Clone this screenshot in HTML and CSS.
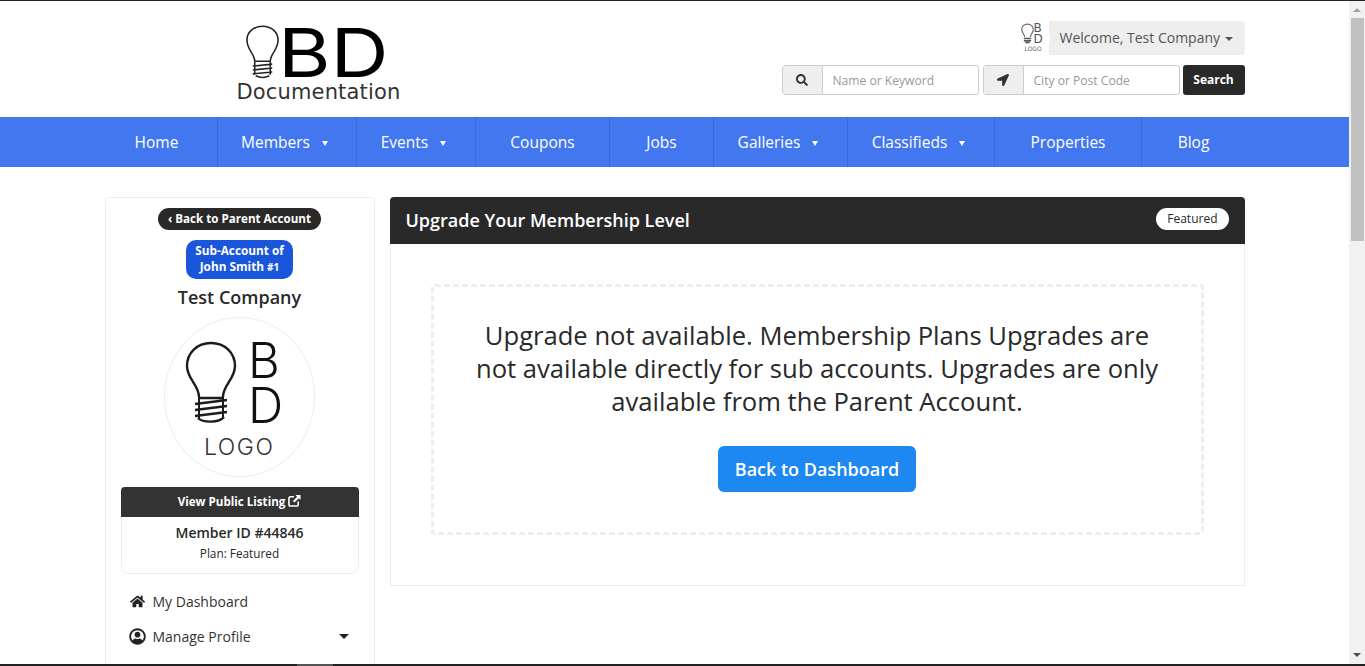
FILE: index.html
```html
<!DOCTYPE html>
<html lang="en">
<head>
    <meta charset="UTF-8">
    <meta name="viewport" content="width=device-width, initial-scale=1.0">
    <title>Upgrade Your Membership Level</title>
    <link rel="stylesheet" href="styles.css">
</head>
<body>

<div class="window">
    <div class="page">

        <header class="site-header">
            <div class="container header-row">
                <div class="site-logo">
                    <svg class="site-bulb" viewBox="0 0 36 56" aria-hidden="true">
                        <path d="M10 38 C10 30 2 27 2 16 C2 8 9 2 18 2 C27 2 34 8 34 16 C34 27 26 30 26 38" fill="none" stroke="#222" stroke-width="1.6"/>
                        <path d="M10 38 H26 M8 43 L28 41 M8 47 L28 45 M8 51 L28 49 M10 38 V52 M26 38 V52 M11 53 C15 55 21 55 25 53" fill="none" stroke="#222" stroke-width="1.6"/>
                    </svg>
                    <span class="logo-bd">BD</span>
                    <span class="logo-doc">Documentation</span>
                </div>
                <div class="header-tools">
                    <div class="welcome">
                        <div class="welcome-avatar">
                            <svg class="mini-bulb" viewBox="0 0 36 56" aria-hidden="true">
                                <path d="M10 38 C10 30 2 27 2 16 C2 8 9 2 18 2 C27 2 34 8 34 16 C34 27 26 30 26 38" fill="none" stroke="#666" stroke-width="3"/>
                                <path d="M8 42 H28 M8 48 H28 M12 53 H24" fill="none" stroke="#555" stroke-width="4"/>
                            </svg>
                            <span class="mini-bd">B<br>D</span>
                            <span class="mini-logo">LOGO</span>
                        </div>
                        <div class="welcome-pill">Welcome, Test Company <i class="caret"></i></div>
                    </div>
                    <form class="search-row">
                        <div class="search-group">
                            <span class="search-addon">
                                <svg viewBox="0 0 512 512" aria-hidden="true"><path d="M505 442.7L405.3 343c-4.500-4.500-10.600-7-17-7H372c27.600-35.300 44-79.700 44-128C416 93.100 322.900 0 208 0S0 93.100 0 208s93.100 208 208 208c48.300 0 92.700-16.400 128-44v16.300c0 6.400 2.500 12.500 7 17l99.700 99.700c9.400 9.400 24.600 9.400 33.900 0l28.300-28.300c9.400-9.400 9.400-24.600.1-34zM208 336c-70.700 0-128-57.200-128-128 0-70.700 57.200-128 128-128 70.700 0 128 57.200 128 128 0 70.700-57.200 128-128 128z"/></svg>
                            </span>
                            <span class="search-input">Name or Keyword</span>
                        </div>
                        <div class="search-group">
                            <span class="search-addon">
                                <svg viewBox="0 0 512 512" aria-hidden="true"><path d="M444.500 3.500L28.700 195.400c-48 22.400-32 92.800 16 92.800h175.900v175.900c0 48 70.400 64 92.800 16L505.300 64.300c16-38.400-24.500-76.800-60.800-60.800z"/></svg>
                            </span>
                            <span class="search-input">City or Post Code</span>
                        </div>
                        <button type="button" class="search-btn">Search</button>
                    </form>
                </div>
            </div>
        </header>

        <nav class="main-nav">
            <a class="nav-home">Home</a>
            <a class="nav-members has-sub">Members <i class="nav-arrow"></i></a>
            <a class="nav-events has-sub">Events <i class="nav-arrow"></i></a>
            <a class="nav-coupons">Coupons</a>
            <a class="nav-jobs">Jobs</a>
            <a class="nav-galleries has-sub">Galleries <i class="nav-arrow"></i></a>
            <a class="nav-classifieds has-sub">Classifieds <i class="nav-arrow"></i></a>
            <a class="nav-properties">Properties</a>
            <a class="nav-blog">Blog</a>
        </nav>

        <div class="container content">
            <aside class="sidebar">
                <a class="back-pill">&lsaquo; Back to Parent Account</a>
                <div class="sub-badge">Sub-Account of<br>John Smith <small>#1</small></div>
                <div class="company">Test Company</div>
                <div class="profile-logo">
                    <svg class="profile-bulb" viewBox="0 0 52 84" aria-hidden="true">
                        <path d="M14 56 C14 44 2 38 2 25 C2 12 12 2 26 2 C40 2 50 12 50 25 C50 38 38 44 38 56" fill="none" stroke="#1c1c1c" stroke-width="2.4"/>
                        <path d="M13 57 H39 M10 63 L42 59 M10 69 L42 65 M10 75 L42 71 M13 77 C18 82 34 82 39 76" fill="none" stroke="#1c1c1c" stroke-width="2.4"/>
                        <path d="M14 56 V78 M38 56 V76" fill="none" stroke="#1c1c1c" stroke-width="2"/>
                    </svg>
                    <span class="profile-bd">B<br>D</span>
                    <span class="profile-word">LOGO</span>
                </div>
                <div class="listing-card">
                    <a class="listing-link">View Public Listing
                        <svg viewBox="0 0 14 14" aria-hidden="true"><path d="M11 8 V11.5 C11 12.3 10.3 13 9.5 13 H2.5 C1.7 13 1 12.3 1 11.5 V4.500 C1 3.700 1.700 3 2.500 3 H6.500" fill="none" stroke="#fff" stroke-width="1.7"/><path d="M8 1 H13.5 V6.5 L11.6 4.7 L7 9.2 L5.3 7.5 L9.8 2.9 Z" fill="#fff"/></svg>
                    </a>
                    <div class="member-id">Member ID #44846</div>
                    <div class="member-plan">Plan: Featured</div>
                </div>
                <ul class="side-menu">
                    <li>
                        <svg viewBox="0 0 576 512" aria-hidden="true"><path d="M280.400 148.300L96 300.100V464a16 16 0 0 0 16 16l112.100-.3a16 16 0 0 0 15.900-16V368a16 16 0 0 1 16-16h64a16 16 0 0 1 16 16v95.600a16 16 0 0 0 16 16.100L464 480a16 16 0 0 0 16-16V300L295.700 148.300a12.200 12.200 0 0 0-15.300 0zM571.600 251.500L488 182.600V44.100a12 12 0 0 0-12-12h-56a12 12 0 0 0-12 12v72.600L318.500 43a48 48 0 0 0-61 0L4.300 251.500a12 12 0 0 0-1.600 16.900l25.500 31A12 12 0 0 0 45.200 301l235.200-193.700a12.200 12.200 0 0 1 15.300 0L530.900 301a12 12 0 0 0 16.900-1.600l25.500-31a12 12 0 0 0-1.700-16.900z"/></svg>
                        <span>My Dashboard</span>
                    </li>
                    <li>
                        <svg viewBox="0 0 512 512" aria-hidden="true"><path fill-rule="evenodd" d="M256 8C119 8 8 119 8 256s111 248 248 248 248-111 248-248S393 8 256 8zm0 56c106 0 192 86 192 192 0 45-15 86-42 118-30-40-70-60-90-60-18 12-38 18-60 18s-42-6-60-18c-20 0-60 20-90 60-27-32-42-73-42-118C64 150 150 64 256 64zm0 48c-48 0-88 40-88 88s40 88 88 88 88-40 88-88-40-88-88-88z"/></svg>
                        <span>Manage Profile</span>
                        <i class="menu-caret"></i>
                    </li>
                </ul>
            </aside>

            <main class="upgrade">
                <div class="upgrade-head">
                    <h1>Upgrade Your Membership Level</h1>
                    <span class="plan-pill">Featured</span>
                </div>
                <div class="upgrade-body">
                    <div class="notice">
                        <p>Upgrade not available. Membership Plans Upgrades are not available directly for sub accounts. Upgrades are only available from the Parent Account.</p>
                        <a class="dash-btn">Back to Dashboard</a>
                    </div>
                </div>
            </main>
        </div>

    </div>
    <div class="scrollbar">
        <i class="scroll-up"></i>
        <div class="scroll-thumb"></div>
        <i class="scroll-down"></i>
    </div>
</div>

<div class="taskbar"><div class="taskbar-mark"></div></div>

</body>
</html>
```

FILE: styles.css
```css
html, body {
    height: 100%;
}

body {
    margin: 0;
    font-family: "Open Sans", Arial, sans-serif;
    color: #292929;
    background-color: #fff;
    border-top: 1px solid #222;
    box-sizing: border-box;
    display: flex;
    flex-direction: column;
    overflow: hidden;
}

.window {
    flex: 1;
    min-height: 0;
    display: flex;
}

.page {
    flex: 1;
    min-width: 0;
    overflow: hidden;
}

.container {
    width: 1140px;
    margin: 0 auto;
}

/* scrollbar + bottom edge of the capture */
.scrollbar {
    width: 16px;
    background-color: #f1f1f1;
    display: flex;
    flex-direction: column;
    align-items: center;
    position: relative;
}

.scroll-up {
    margin-top: 7px;
    border-bottom: 4px solid #a3a3a3;
    border-left: 4px solid transparent;
    border-right: 4px solid transparent;
}

.scroll-thumb {
    width: 13px;
    height: 223px;
    margin: 6px 0 0 1px;
    background-color: #c1c1c1;
}

.scroll-down {
    margin-top: auto;
    margin-bottom: 7px;
    border-top: 4px solid #505050;
    border-left: 4px solid transparent;
    border-right: 4px solid transparent;
}

.taskbar {
    height: 2px;
    background-color: #222;
    position: relative;
}

.taskbar-mark {
    position: absolute;
    left: 297px;
    top: 0;
    width: 36px;
    height: 2px;
    background-color: #555;
}

/* header */
.site-header {
    height: 116px;
}

.header-row {
    display: flex;
    justify-content: space-between;
}

.site-logo {
    position: relative;
    margin-left: 131px;
    width: 170px;
    height: 116px;
}

.site-bulb {
    position: absolute;
    left: 9px;
    top: 23px;
    width: 35px;
    height: 55px;
}

.logo-bd {
    position: absolute;
    left: 42px;
    top: 27px;
    font-family: "Inter", sans-serif;
    font-size: 67px;
    font-weight: 400;
    line-height: 50px;
    color: #000;
    transform: scaleX(1.2);
    transform-origin: left top;
}

.logo-doc {
    position: absolute;
    left: 1px;
    top: 79px;
    font-family: "DejaVu Sans", sans-serif;
    font-size: 21px;
    letter-spacing: 0.15px;
    line-height: 24px;
    color: #333;
    white-space: nowrap;
}

.header-tools {
    padding-top: 20px;
    display: flex;
    flex-direction: column;
    align-items: flex-end;
}

.welcome {
    display: flex;
    height: 34px;
}

.welcome-avatar {
    position: relative;
    width: 32px;
    height: 34px;
    background-color: #fff;
    border-radius: 50%;
    margin-right: -1px;
    z-index: 1;
}

.mini-bulb {
    position: absolute;
    left: 3px;
    top: 2px;
    width: 13px;
    height: 21px;
}

.mini-bd {
    position: absolute;
    left: 16px;
    top: 2px;
    font-family: "DejaVu Sans", sans-serif;
    font-size: 12px;
    line-height: 11px;
    color: #555;
}

.mini-logo {
    position: absolute;
    left: 7px;
    top: 25px;
    font-family: "DejaVu Sans", sans-serif;
    font-size: 6px;
    line-height: 6px;
    color: #666;
}

.welcome-pill {
    width: 196px;
    box-sizing: border-box;
    padding-left: 11px;
    background-color: #eee;
    border-radius: 0 4px 4px 0;
    font-size: 14px;
    line-height: 34px;
    color: #555;
}

.caret {
    display: inline-block;
    margin-left: 1px;
    vertical-align: middle;
    border-top: 4px solid #555;
    border-left: 4px solid transparent;
    border-right: 4px solid transparent;
}

.search-row {
    display: flex;
    margin: 10px 0 0;
}

.search-group {
    display: flex;
    width: 197px;
    height: 30px;
    box-sizing: border-box;
    margin-right: 4px;
    border: 1px solid #ccc;
    border-radius: 3px;
    font-size: 12.1px;
    line-height: 30px;
    color: #999;
}

.search-group + .search-group {
    margin-right: 3px;
}

.search-addon {
    width: 39px;
    background-color: #eee;
    border-right: 1px solid #ccc;
    display: flex;
    align-items: center;
    justify-content: center;
}

.search-addon svg {
    width: 12px;
    height: 12px;
    fill: #333;
}

.search-input {
    padding-left: 10px;
}

.search-btn {
    width: 62px;
    height: 30px;
    border: none;
    border-radius: 3px;
    padding: 0 0 2px;
    background-color: #292929;
    color: #fff;
    font-family: inherit;
    font-size: 12px;
    font-weight: 700;
}

/* main nav */
.main-nav {
    height: 50px;
    display: flex;
    padding-left: 100px;
    background-color: #4277ef;
    font-size: 15.5px;
    font-weight: 500;
    line-height: 50px;
    color: #fff;
}

.main-nav a {
    box-sizing: border-box;
    border-right: 1px solid #3a69d6;
    text-align: center;
    white-space: nowrap;
}

.main-nav a.has-sub {
    padding-right: 5px;
}

.nav-home { width: 118px; padding-right: 4px; }
.nav-members { width: 139px; }
.nav-events { width: 119px; }
.nav-coupons { width: 134px; }
.nav-jobs { width: 104px; }
.nav-galleries { width: 134px; }
.nav-classifieds { width: 147px; }
.nav-properties { width: 147px; }

.main-nav a.nav-blog {
    width: 103px;
    border-right: none;
}

.nav-arrow {
    display: inline-block;
    margin-left: 8px;
    vertical-align: 2px;
    border-top: 5px solid #fff;
    border-left: 3px solid transparent;
    border-right: 3px solid transparent;
}

/* two columns */
.content {
    display: flex;
    align-items: flex-start;
    gap: 15px;
    padding-top: 30px;
}

.sidebar {
    width: 270px;
    flex-shrink: 0;
    height: 500px;
    box-sizing: border-box;
    padding: 10px 15px 0;
    border: 1px solid #eee;
    border-radius: 4px;
    display: flex;
    flex-direction: column;
    align-items: center;
}

.back-pill {
    height: 22px;
    padding: 0 10px;
    background-color: #292929;
    border-radius: 11px;
    color: #fff;
    font-size: 11.6px;
    font-weight: 700;
    line-height: 21px;
    white-space: nowrap;
}

.sub-badge {
    width: 107px;
    margin-top: 10px;
    padding: 2px 0 4px;
    background-color: #1a56db;
    border-radius: 10px;
    color: #fff;
    font-size: 11.8px;
    font-weight: 700;
    line-height: 16px;
    text-align: center;
}

.sub-badge small {
    font-size: 10px;
}

.company {
    margin-top: 5px;
    font-size: 18px;
    font-weight: 600;
    line-height: 26px;
}

.profile-logo {
    position: relative;
    width: 151px;
    height: 160px;
    box-sizing: border-box;
    margin-top: 7px;
    border: 1px solid #eee;
    border-radius: 50%;
}

.profile-bulb {
    position: absolute;
    left: 20px;
    top: 23px;
    width: 52px;
    height: 84px;
}

.profile-bd {
    position: absolute;
    left: 83px;
    top: 20px;
    font-family: "Inter", sans-serif;
    font-size: 49px;
    font-weight: 300;
    line-height: 45px;
    color: #111;
}

.profile-word {
    position: absolute;
    left: 39px;
    top: 115px;
    font-family: "Inter", sans-serif;
    font-size: 23px;
    font-weight: 300;
    letter-spacing: 1.5px;
    line-height: 28px;
    color: #333;
}

.listing-card {
    width: 238px;
    margin-top: 10px;
    height: 87px;
    box-sizing: border-box;
    border: 1px solid #eee;
    border-radius: 8px;
    text-align: center;
}

.listing-link {
    display: block;
    margin: -1px -1px 0;
    height: 30px;
    background-color: #333;
    border-radius: 4px 4px 0 0;
    color: #fff;
    font-size: 11.6px;
    font-weight: 700;
    line-height: 30px;
}

.listing-link svg {
    width: 13px;
    height: 13px;
    vertical-align: -1px;
}

.member-id {
    margin-top: 6px;
    font-size: 14px;
    font-weight: 600;
    line-height: 20px;
}

.member-plan {
    font-size: 11.8px;
    line-height: 20px;
}

.side-menu {
    list-style: none;
    align-self: stretch;
    margin: 10px 0 0;
    padding: 0;
    font-size: 14px;
    color: #333;
}

.side-menu li {
    height: 35px;
    display: flex;
    align-items: center;
    padding-left: 9px;
}

.side-menu svg {
    width: 15px;
    height: 15px;
    margin-right: 8px;
    fill: #222;
    flex-shrink: 0;
}

.side-menu li:last-child svg {
    width: 17px;
    height: 17px;
    margin: 0 7px 0 -1px;
}

.menu-caret {
    margin-left: auto;
    margin-right: 10px;
    border-top: 5px solid #222;
    border-left: 5px solid transparent;
    border-right: 5px solid transparent;
}

/* upgrade panel */
.upgrade {
    flex: 1;
    min-width: 0;
}

.upgrade-head {
    height: 47px;
    box-sizing: border-box;
    padding: 0 16px 1px;
    background-color: #292929;
    border-radius: 4px 4px 0 0;
    color: #fff;
    display: flex;
    align-items: center;
    justify-content: space-between;
}

.upgrade-head h1 {
    margin: 0;
    font-size: 18px;
    font-weight: 600;
}

.plan-pill {
    height: 22px;
    padding: 0 11px;
    background-color: #fff;
    border-radius: 11px;
    color: #292929;
    font-size: 12px;
    font-weight: 500;
    line-height: 21px;
    margin-bottom: 2px;
}

.upgrade-body {
    height: 342px;
    box-sizing: border-box;
    padding: 40px 40px 0;
    border: 1px solid #eee;
    border-top: none;
}

.notice {
    height: 251px;
    box-sizing: border-box;
    padding: 32px 35px 0;
    border: 3px dashed #eee;
    border-radius: 4px;
    text-align: center;
}

.notice p {
    margin: 0 0 28px;
    font-size: 25.6px;
    line-height: 33px;
}

.dash-btn {
    display: inline-block;
    height: 46px;
    padding: 0 17px;
    background-color: #1e88f2;
    border-radius: 6px;
    color: #fff;
    font-size: 18px;
    font-weight: 600;
    line-height: 46px;
}
```
